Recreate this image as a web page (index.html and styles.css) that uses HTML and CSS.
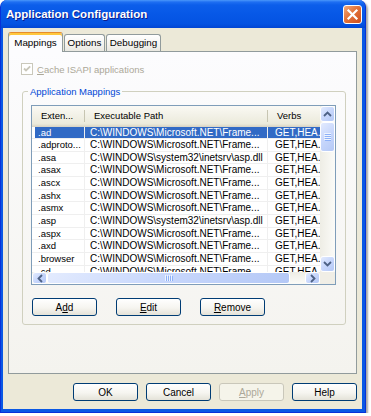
FILE: index.html
```html
<!DOCTYPE html>
<html>
<head>
<meta charset="utf-8">
<title>Application Configuration</title>
<link rel="stylesheet" href="styles.css">
</head>
<body>
<div class="window">
  <div class="titlebar">
    <span class="title">Application Configuration</span>
    <div class="close"><svg width="17" height="17" viewBox="0 0 17 17"><path d="M4.5 4.5 L12.5 12.5 M12.5 4.5 L4.5 12.5" stroke="#fff" stroke-width="2.2" stroke-linecap="square"/></svg></div>
  </div>
  <div class="client">
    <div class="tabs">
      <div class="tab sel">Mappings</div>
      <div class="tab opt">Options</div>
      <div class="tab dbg">Debugging</div>
    </div>
    <div class="panel">
      <div class="chkrow">
        <span class="chk"><svg width="10" height="10" viewBox="0 0 10 10"><path d="M2 4.5 L4 6.5 L8.2 2.3" fill="none" stroke="#C9C7BA" stroke-width="1.8"/></svg></span>
        <span class="dis"><u>C</u>ache ISAPI applications</span>
      </div>
      <fieldset class="group">
        <legend>Application Mappings</legend>
        <div class="gbody">
          <div class="list">
            <div class="view">
              <div class="hdr"><div class="h1">Exten...</div><div class="h2">Executable Path</div><div class="h3">Verbs</div></div>
              <div class="row sel"><div class="c1">.ad</div><div class="c2">C:\WINDOWS\Microsoft.NET\Frame...</div><div class="c3">GET,HEA...</div></div>
              <div class="row"><div class="c1">.adproto...</div><div class="c2">C:\WINDOWS\Microsoft.NET\Frame...</div><div class="c3">GET,HEA...</div></div>
              <div class="row"><div class="c1">.asa</div><div class="c2">C:\WINDOWS\system32\inetsrv\asp.dll</div><div class="c3">GET,HEA...</div></div>
              <div class="row"><div class="c1">.asax</div><div class="c2">C:\WINDOWS\Microsoft.NET\Frame...</div><div class="c3">GET,HEA...</div></div>
              <div class="row"><div class="c1">.ascx</div><div class="c2">C:\WINDOWS\Microsoft.NET\Frame...</div><div class="c3">GET,HEA...</div></div>
              <div class="row"><div class="c1">.ashx</div><div class="c2">C:\WINDOWS\Microsoft.NET\Frame...</div><div class="c3">GET,HEA...</div></div>
              <div class="row"><div class="c1">.asmx</div><div class="c2">C:\WINDOWS\Microsoft.NET\Frame...</div><div class="c3">GET,HEA...</div></div>
              <div class="row"><div class="c1">.asp</div><div class="c2">C:\WINDOWS\system32\inetsrv\asp.dll</div><div class="c3">GET,HEA...</div></div>
              <div class="row"><div class="c1">.aspx</div><div class="c2">C:\WINDOWS\Microsoft.NET\Frame...</div><div class="c3">GET,HEA...</div></div>
              <div class="row"><div class="c1">.axd</div><div class="c2">C:\WINDOWS\Microsoft.NET\Frame...</div><div class="c3">GET,HEA...</div></div>
              <div class="row"><div class="c1">.browser</div><div class="c2">C:\WINDOWS\Microsoft.NET\Frame...</div><div class="c3">GET,HEA...</div></div>
              <div class="row"><div class="c1">.cd</div><div class="c2">C:\WINDOWS\Microsoft.NET\Frame...</div><div class="c3">GET,HEA...</div></div>
            </div>
            <div class="vscroll">
              <div class="sbtn vb"><svg width="9" height="6" viewBox="0 0 9 6"><path d="M1 5 L4.5 1.5 L8 5" fill="none" stroke="#4D6185" stroke-width="1.8"/></svg></div>
              <div class="thumb vt"><svg width="7" height="8" viewBox="0 0 7 8"><path d="M0 0.5H7M0 2.5H7M0 4.5H7M0 6.5H7" stroke="#EEF4FE" stroke-width="1"/><path d="M1 1.5H7M1 3.5H7M1 5.5H7M1 7.5H7" stroke="#8CB0F8" stroke-width="1"/></svg></div>
              <div class="track"></div>
              <div class="sbtn vb"><svg width="9" height="6" viewBox="0 0 9 6"><path d="M1 1 L4.5 4.5 L8 1" fill="none" stroke="#4D6185" stroke-width="1.8"/></svg></div>
            </div>
            <div class="hscroll">
              <div class="sbtn hb"><svg width="6" height="9" viewBox="0 0 6 9"><path d="M5 1 L1.5 4.5 L5 8" fill="none" stroke="#4D6185" stroke-width="1.8"/></svg></div>
              <div class="thumb ht"><svg width="8" height="6" viewBox="0 0 8 6"><path d="M0.5 0V6M2.5 0V6M4.5 0V6M6.5 0V6" stroke="#EEF4FE" stroke-width="1"/><path d="M1.5 1V6M3.5 1V6M5.5 1V6M7.5 1V6" stroke="#8CB0F8" stroke-width="1"/></svg></div>
              <div class="track"></div>
              <div class="sbtn hb"><svg width="6" height="9" viewBox="0 0 6 9"><path d="M1 1 L4.5 4.5 L1 8" fill="none" stroke="#4D6185" stroke-width="1.8"/></svg></div>
            </div>
            <div class="corner"></div>
          </div>
          <div class="lbtns">
            <button class="btn">A<u>d</u>d</button>
            <button class="btn"><u>E</u>dit</button>
            <button class="btn"><u>R</u>emove</button>
          </div>
        </div>
      </fieldset>
    </div>
    <div class="btns">
      <button class="btn">OK</button>
      <button class="btn">Cancel</button>
      <button class="btn off" disabled><u>A</u>pply</button>
      <button class="btn">Help</button>
    </div>
  </div>
</div>
</body>
</html>
```
FILE: styles.css
```css
* { box-sizing: border-box; }
html, body { margin: 0; padding: 0; background: #fff; }
body {
  font-family: "Liberation Sans", Arial, sans-serif;
  font-size: 9.5px;
  color: #000;
}
.window {
  width: 366px;
  height: 413px;
  display: flex;
  flex-direction: column;
  background: #0A58E4;
  border: 1px solid #0831D9;
  border-top: none;
  border-radius: 7px 7px 0 0;
  overflow: hidden;
  box-shadow: 2px 2px 2px rgba(0, 0, 0, 0.35);
}
.titlebar {
  height: 28px;
  flex: none;
  display: flex;
  align-items: center;
  justify-content: space-between;
  padding: 0 3px 0 5px;
  background: linear-gradient(#4A98FA 0, #1F6FF2 2px, #0C5EEA 5px, #0758E7 50%, #0453E2 85%, #0246D3 100%);
}
.title {
  color: #fff;
  font-weight: bold;
  font-size: 11.5px;
  text-shadow: 1px 1px #0F1E8C;
}
.close {
  width: 19px;
  height: 19px;
  border: 1px solid #fff;
  border-radius: 3px;
  background: linear-gradient(135deg, #F3AA7C, #E3733A 45%, #CE4E1E);
  display: flex;
  align-items: center;
  justify-content: center;
}
.client {
  flex: 1;
  margin: 0 3px 3px 2px;
  background: #ECE9D8;
  display: flex;
  flex-direction: column;
  padding: 4px 5px 8px 5px;
}
.tabs {
  display: flex;
  align-items: flex-end;
  height: 19px;
  flex: none;
  position: relative;
  z-index: 1;
}
.tab {
  height: 17px;
  border: 1px solid #919B9C;
  border-bottom: none;
  border-radius: 3px 3px 0 0;
  background: linear-gradient(#FFFFFF, #F4F3EF 60%, #E9E8E1);
  text-align: center;
  line-height: 16px;
  white-space: nowrap;
  font-size: 9.8px;
}
.tab.sel {
  width: 55px;
  height: 20px;
  margin-bottom: -1px;
  background: #FCFCFE;
  border-top: 1px solid #E68B2C;
  box-shadow: inset 0 2px 0 #FFC73C;
  line-height: 19px;
}
.tab.opt { width: 41px; margin-left: 1px; }
.tab.dbg { width: 55px; margin-left: 1px; }
.panel {
  height: 323px;
  flex: none;
  border: 1px solid #919B9C;
  background: linear-gradient(#FCFCFE, #F4F3EE);
  padding: 11px 0 0 12px;
}
.chkrow {
  display: flex;
  align-items: center;
  gap: 4px;
  height: 12px;
}
.chk {
  width: 12px;
  height: 12px;
  border: 1px solid #CAC8BB;
  background: #fff;
  display: flex;
}
.dis { color: #ACA899; }
.group {
  margin: 11px 10px 0 1px;
  padding: 0;
  border: 1px solid #D0D0BF;
  border-radius: 3px;
  min-width: 0;
}
.group legend {
  color: #0046D5;
  padding: 0 2px;
  margin-left: 5px;
  line-height: 11px;
}
.gbody {
  padding: 8px 9px 8px 8px;
}
.list {
  height: 180px;
  border: 1px solid #7F9DB9;
  background: #fff;
  display: grid;
  grid-template-columns: 1fr 15px;
  grid-template-rows: 1fr 12px;
}
.view {
  overflow: hidden;
  min-width: 0;
  min-height: 0;
}
.hdr {
  display: grid;
  grid-template-columns: 53px 183px 52px;
  height: 20.5px;
  background: linear-gradient(#FAF9F4, #EBEADB 85%, #D6D2C2);
  line-height: 20px;
  white-space: nowrap;
}
.hdr > div { padding-left: 9px; overflow: hidden; }
.h1, .h2 {
  background: linear-gradient(#C7C5B2, #C7C5B2) right 4px / 1px 12px no-repeat;
}
.row {
  display: grid;
  grid-template-columns: 53px 183px 52px;
  height: 12.66px;
  line-height: 12.5px;
  white-space: nowrap;
  border-bottom: 1px solid #EFEFEF;
  font-size: 10px;
}
.row > div { padding-left: 6px; overflow: hidden; }
.row .c1, .row .c2 { border-right: 1px solid #EFEFEF; }
.row .c1 { font-size: 9.5px; }
.row .c2 { padding-left: 5px; }
.row .c3 { padding-left: 7px; }
.row.sel {
  background: linear-gradient(90deg, transparent 3px, #316AC5 3px);
  color: #fff;
}
.vscroll {
  display: flex;
  flex-direction: column;
  background: linear-gradient(90deg, #EEEDE5, #FBFBF8);
}
.hscroll {
  display: flex;
  background: linear-gradient(#EEEDE5, #FBFBF8);
}
.track { flex: 1; }
.sbtn, .thumb {
  border: 1px solid #fff;
  border-radius: 3px;
  background: linear-gradient(135deg, #E3EBFE 0%, #C9D8FC 45%, #B4C8F6 100%);
  display: flex;
  align-items: center;
  justify-content: center;
  flex: none;
}
.vb { height: 16px; }
.vt { height: 30px; }
.hb { width: 15px; }
.ht { width: 243px; }
.corner { background: #F0EEE6; }
.lbtns {
  display: flex;
  gap: 19px;
  margin-top: 13px;
  padding-left: 1px;
}
.btn {
  width: 65px;
  height: 18px;
  font: inherit;
  font-size: 10px;
  color: #000;
  padding: 0;
  border: 1px solid #003C74;
  border-radius: 3px;
  background: linear-gradient(#FFFFFF, #F6F5F0 55%, #E4E2D8);
}
.btn.off {
  border-color: #C9C7BA;
  color: #ACA899;
  background: #F5F4EA;
}
.btns {
  display: flex;
  justify-content: flex-end;
  gap: 8px;
  margin-top: 9px;
}
```
